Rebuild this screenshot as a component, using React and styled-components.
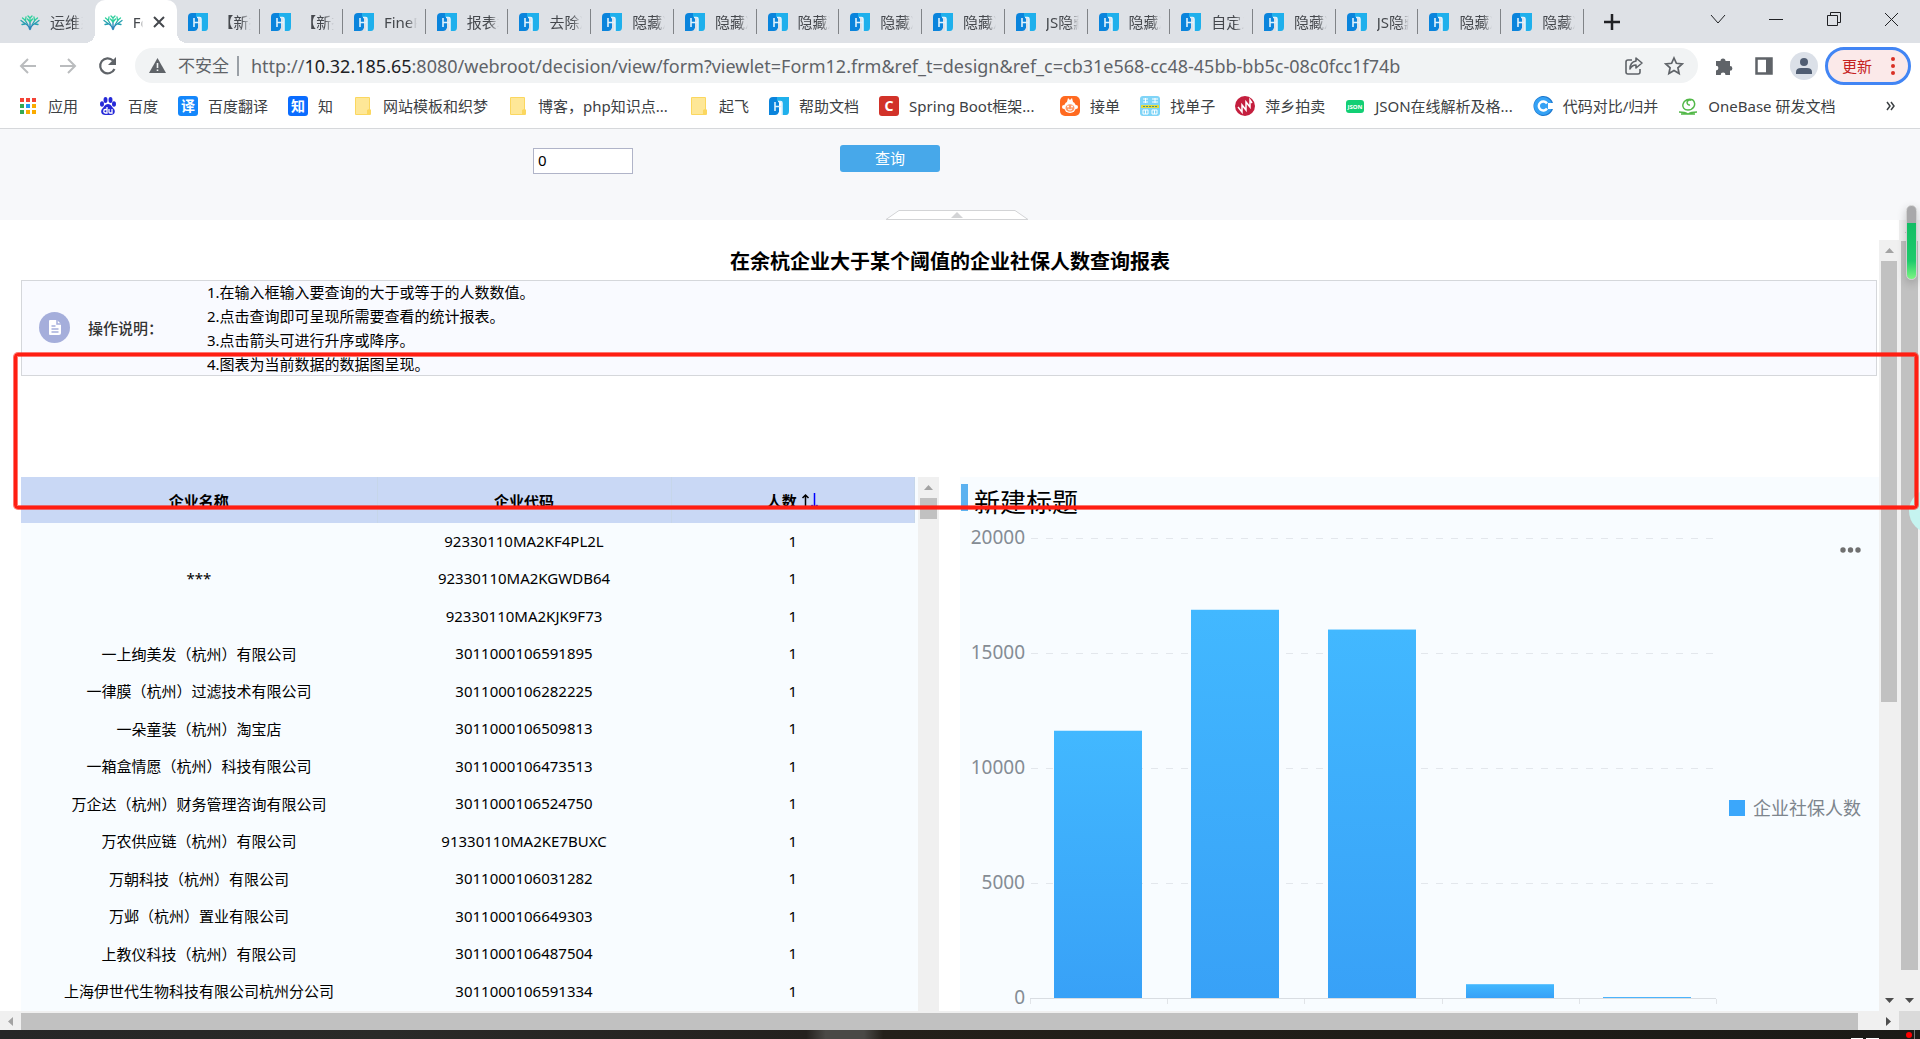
import React, { useState } from 'react';
import styled, { createGlobalStyle } from 'styled-components';

const GlobalStyle = createGlobalStyle`
* { box-sizing: border-box; }
body {
  margin: 0;
  background: #fff;
  color: #000;
  font-family: "Noto Sans", "Noto Sans CJK SC", sans-serif;
  font-size: 15px;
}
button { border: 0; padding: 0; background: none; font: inherit; color: inherit; cursor: pointer; }
input { font: inherit; }
svg { display: block; }
`;

const Page = styled.div`
position: relative;
display: flex;
flex-direction: column;
min-height: 100vh;
overflow: hidden;
`;

/* ---------- browser header ---------- */

const TabStrip = styled.div`
display: flex;
height: 43px;
padding-left: 12px;
background: #dee1e6;
`;

const Tabs = styled.div`
display: flex;
flex: 1;
min-width: 0;
`;

const Tab = styled.button`
position: relative;
display: flex;
flex: 1 1 0;
min-width: 0;
align-items: center;
gap: 10px;
padding: ${({ $line }) => ($line ? '0 9px 0 11px' : '0 12px 0 8px')};
color: #45484d;
text-align: left;
border-radius: ${({ $active }) => ($active ? '10px 10px 0 0' : '0')};
background: ${({ $active }) => ($active ? '#fff' : 'transparent')};
&::before {
  content: "";
  display: ${({ $active }) => ($active ? 'block' : 'none')};
  position: absolute;
  bottom: 0;
  left: -10px;
  right: -10px;
  height: 10px;
  background:
    radial-gradient(circle at 0 0, transparent 10px, #fff 10px) left / 10px 10px no-repeat,
    radial-gradient(circle at 100% 0, transparent 10px, #fff 10px) right / 10px 10px no-repeat;
}
&::after {
  content: "";
  display: ${({ $line }) => ($line ? 'block' : 'none')};
  position: absolute;
  right: 0;
  top: 9px;
  width: 1px;
  height: 25px;
  background: #808387;
}
`;

const TabTitle = styled.span`
flex: 1;
min-width: 0;
overflow: hidden;
white-space: nowrap;
mask-image: linear-gradient(90deg, #000 70%, transparent);
`;

const WindowTools = styled.div`
display: flex;
justify-content: space-between;
width: 336px;
padding: 0 20px 0 18px;
color: #202124;
`;

const WindowButtons = styled.div`
display: flex;
gap: 42px;
padding-bottom: 6px;
`;

const Toolbar = styled.div`
display: flex;
align-items: center;
height: 45px;
padding: 0 9px 0 18px;
color: #5f6368;
`;

const NavButtons = styled.div`
display: flex;
gap: 20px;
width: 117px;
`;

const AddressBar = styled.div`
display: flex;
flex: 1;
align-items: center;
height: 35px;
padding: 0 14px;
border-radius: 18px;
background: #f1f3f4;
font-size: 17px;
`;

const Insecure = styled.span`
margin-left: 12px;
padding-right: 8px;
border-right: 2px solid #9aa0a6;
line-height: 20px;
white-space: nowrap;
`;

const Url = styled.span`
flex: 1;
min-width: 0;
margin-left: 12px;
font-size: 18px;
white-space: nowrap;
outline: none;
b { font-weight: 400; color: #202124; }
`;

const AddressIcons = styled.div`
display: flex;
gap: 20px;
`;

const Extensions = styled.div`
display: flex;
align-items: center;
gap: 20px;
margin: 0 7px 0 16px;
`;

const Avatar = styled.button`
width: 28px;
height: 28px;
margin-left: -4px;
border-radius: 50%;
background: #dbe0e8;
overflow: hidden;
`;

const UpdateButton = styled.button`
display: flex;
align-items: center;
justify-content: space-between;
width: 86px;
height: 38px;
padding: 0 13px 0 14px;
border: 3px solid #4285f4;
border-radius: 19px;
background: #fbe9e9;
color: #c5221f;
`;

const Bookmarks = styled.nav`
display: flex;
align-items: center;
gap: 20px;
height: 41px;
padding: 0 24px 4px 18px;
border-bottom: 1px solid #d6d8db;
button { margin-left: auto; color: #3c4043; }
`;

const Bookmark = styled.a`
display: flex;
align-items: center;
gap: 10px;
min-width: ${({ $long }) => ($long ? '161px' : '0')};
color: #3c4043;
line-height: 20px;
white-space: nowrap;
text-decoration: none;
`;

const Badge = styled.span`
width: 20px;
height: 20px;
border-radius: 3px;
background: ${({ $bg }) => $bg};
color: #fff;
font-size: 14px;
font-weight: 700;
line-height: 20px;
text-align: center;
`;

/* ---------- query form ---------- */

const QueryForm = styled.form`
position: relative;
display: flex;
align-items: flex-start;
gap: 207px;
height: 91px;
padding: 16px 0 0 533px;
background: #f7f8fa;
`;

const NumberInput = styled.input`
width: 100px;
height: 26px;
margin-top: 3px;
padding: 0 4px 2px;
border: 1px solid #b0b4c8;
background: #fff;
outline: none;
`;

const QueryButton = styled.button`
width: 100px;
height: 27px;
border-radius: 3px;
background: #47a8ea;
color: #fff;
line-height: 27px;
`;

const Handle = styled.button`
position: absolute;
bottom: 0;
left: calc(50% - 75px);
`;

/* ---------- report ---------- */

const Viewport = styled.div`
display: flex;
flex: 1;
`;

const Report = styled.main`
flex: 1;
min-width: 0;
padding: 27px 0 0 21px;
`;

const Title = styled.h1`
margin: 0 0 3px;
font-size: 20px;
font-weight: 700;
line-height: 30px;
text-align: center;
`;

const Info = styled.section`
display: flex;
align-items: center;
height: 96px;
margin-right: 2px;
padding: 0 0 1px 17px;
border: 1px solid #d5d7db;
background: #f9faff;
`;

const InfoLabel = styled.strong`
width: 119px;
margin-left: 18px;
font-weight: 500;
color: #333;
`;

const Steps = styled.ol`
margin: 0;
padding: 0;
list-style: none;
line-height: 24px;
`;

const Panels = styled.div`
display: grid;
grid-template-columns: 1fr 1fr;
gap: 20px;
margin-top: 101px;
`;

const TablePanel = styled.section`
display: flex;
gap: 3px;
margin-right: 1px;
background: #f8fcff;
`;

const Table = styled.table`
flex: 1;
border-collapse: collapse;
table-layout: fixed;
text-align: center;
th {
  height: 46px;
  padding: 0;
  border-right: 1px solid #c6d6ea;
  background: #c9d8f5;
}
td { height: 38px; padding: 0 0 3px; }
tr:nth-child(even) td { height: 37px; }
`;

const NameCol = styled.col`
width: 356px;
`;

const CodeCol = styled.col`
width: 294px;
`;

const SortButton = styled.button`
margin-left: ${({ $down }) => ($down ? '0' : '4px')};
color: ${({ $down }) => ($down ? '#00f' : '#000')};
svg { display: inline-block; vertical-align: -2px; }
`;

const ChartPanel = styled.section`
position: relative;
background: #f8fcff;
`;

const ChartTitle = styled.h2`
position: absolute;
top: 7px;
left: 1px;
display: flex;
gap: 6px;
margin: 0;
font-family: "Liberation Serif", "Noto Sans CJK SC", serif;
font-size: 26px;
font-weight: 400;
line-height: 40px;
&::before {
  content: "";
  width: 7px;
  height: 27px;
  background: #5cb2f0;
}
`;

const Chart = styled.svg`
width: 100%;
height: auto;
font-size: 19px;
fill: #858c94;
`;

const Legend = styled.div`
position: absolute;
top: 317px;
right: 18px;
display: flex;
align-items: center;
gap: 8px;
color: #7d858d;
font-size: 18px;
line-height: 28px;
&::before {
  content: "";
  width: 16px;
  height: 16px;
  background: #3ba7fb;
}
`;

const More = styled.button`
position: absolute;
top: 69px;
right: 14px;
`;

/* ---------- scroll bars ---------- */

const Track = styled.div`
display: flex;
flex-direction: ${({ $row }) => ($row ? 'row' : 'column')};
flex: ${({ $row, $width }) => ($row ? '1' : `0 0 ${$width || 21}px`)};
margin-top: ${({ $top }) => $top || 0}px;
padding: ${({ $row }) => ($row ? '2px 0 0' : '0 2px')};
background: #f0f0f0;
`;

const Arrow = styled.button`
display: grid;
place-items: center;
flex: 0 0 21px;
color: ${({ $dim }) => ($dim ? '#a3a3a3' : '#4d4d4d')};
svg { transform: rotate(${({ $turn }) => $turn}deg); }
`;

const Thumb = styled.div`
flex: ${({ $size }) => $size} 1 0;
background: #c1c1c1;
`;

const Rest = styled.div`
flex: ${({ $size }) => $size} 1 0;
`;

const BottomBar = styled.div`
display: flex;
height: 19px;
`;

const Corner = styled.div`
width: 21px;
background: #dadada;
`;

const Taskbar = styled.footer`
display: flex;
justify-content: flex-end;
height: 9px;
background: linear-gradient(90deg, #262626 0, #2a2a28 20%, #24211e 42%, #4a4946 43%, #4a4946 45%, #24201a 46%, #1b1a16 100%);
`;

/* ---------- things lying over the page ---------- */

const Marker = styled.div`
position: absolute;
top: 353px;
left: 14px;
right: 2px;
height: 156px;
border: 3px solid #ff1e12;
border-radius: 4px;
box-shadow: 0 0 0 1px rgba(255, 30, 18, .6), inset 0 0 0 1px rgba(255, 30, 18, .6);
pointer-events: none;
`;

const Meter = styled.div`
position: absolute;
top: 205px;
right: 3px;
width: 11px;
height: 75px;
border: 1px solid #d0d0d0;
border-radius: 6px;
background: linear-gradient(#a8a8aa 17px, #12bd64 17px, #1ecb6c 55px, #7df582);
box-shadow: 0 3px 10px rgba(0, 0, 0, .2);
`;

const Bubble = styled.div`
position: absolute;
top: 489px;
right: -33px;
width: 44px;
height: 44px;
border-radius: 50%;
background: #c5f4f0;
`;

const Svg = ({ w = 20, h, children, ...rest }) => (
  <svg width={w} height={h || w} viewBox={`0 0 ${w} ${h || w}`} fill="none" stroke="currentColor" aria-hidden="true" {...rest}>
    {children}
  </svg>
);

const TreeIcon = () => (
  <Svg strokeWidth="1.3" strokeLinecap="round">
    <path stroke="#2a86b8" d="M10 17.500V9M9.500 17C9 13.500 7 12.500 5 11.500M10.500 17C11 13.500 13 12.500 15 11.500" />
    <path stroke="#25a0b0" d="M8 13 5 8M12 13l3-5M5 11.500 1 8.500M15 11.500 19 8.500M5 12l-3 .5M15 12l3 .5" />
    <path stroke="#2ccf9c" d="M10 10 7.500 7M10 10l2.500-3M10 6 8 4M10 6 12 4M10 9V6M5 8 2.500 6M5.500 8.500 6 5M15 8l2.500-2M14.500 8.500 14 5" />
  </Svg>
);

const FanIcon = () => (
  <Svg stroke="none">
    <path fill="#0a84dc" d="M0 5Q0 1 4 1h6v14.500q-1 3.500-4 3.500H0z" />
    <path fill="#1fb0ec" d="M8 1h12v14q0 4-3 4h-4V5H8z" />
    <path fill="none" stroke="#dff2fd" strokeWidth="1.600" d="M6 15V6M6 10.500h7M9 5.500h2.500q1.500 0 1.500 1.500V19" />
  </Svg>
);

const FolderIcon = () => (
  <Svg stroke="none">
    <path fill="#fbd75f" d="M3 1h13q1 0 1 1v11l1 1v4q0 1-1 1H3q-1 0-1-1V2q0-1 1-1z" />
    <path fill="#fee797" d="M3 2h13v11l-2 1v4H3z" />
  </Svg>
);

const AppsIcon = () => (
  <Svg stroke="none">
    {['#f44336', '#f44336', '#f44336', '#34a853', '#2196f3', '#fbab00', '#34a853', '#fbab00', '#fbab00'].map((c, i) => (
      <rect key={i} x={2 + (i % 3) * 6} y={2 + Math.floor(i / 3) * 6} width="4" height="4" fill={c} />
    ))}
  </Svg>
);

const BaiduIcon = () => (
  <Svg stroke="none" fill="#2529d8">
    <ellipse cx="4" cy="8" rx="2" ry="2.800" />
    <ellipse cx="7.500" cy="4" rx="2" ry="2.900" />
    <ellipse cx="12.500" cy="4" rx="2" ry="2.900" />
    <ellipse cx="16" cy="8" rx="2" ry="2.800" />
    <path d="M10 8c3 0 4 3 6 5 2 3 0 6-3 6H7c-3 0-5-3-3-6 2-2 3-5 6-5z" />
    <path fill="none" stroke="#fff" strokeWidth="1.300" d="M9 11v6H7.500a1.500 1.500 0 0 1 0-3.500H9M11 13v3q0 1 1 1h2v-4" />
  </Svg>
);

const MonkeyIcon = () => (
  <Svg stroke="none">
    <rect width="20" height="20" rx="5" fill="#ff6a20" />
    <circle cx="10" cy="11" r="6" fill="#fff" />
    <circle cx="4" cy="11" r="2" fill="#fff" />
    <circle cx="16" cy="11" r="2" fill="#fff" />
    <path fill="#fff" d="M7 6 8 2l2 2 2-2 1 4z" />
    <ellipse cx="10" cy="12" rx="4.500" ry="3.800" fill="#ff9a68" />
    <path stroke="#fff" fill="none" d="M8 13q2 2 4 0" />
    <circle cx="8" cy="10.500" r="1" fill="#fff" />
    <circle cx="12" cy="10.500" r="1" fill="#fff" />
  </Svg>
);

const FindIcon = () => (
  <Svg stroke="none">
    <rect width="20" height="20" rx="3" fill="#7fd4f7" />
    <path stroke="#fff" fill="none" d="M3 3h5M5.500 2v5M3 6h5M12 3h6M15 2v5M12 6h6M3 14h5v4H3zM12 14h5v4h-5zM5.500 14v4M14.500 14v4" />
    <rect x="1" y="9" width="18" height="3" fill="#e4dc3c" />
    <path stroke="#4a8f8a" strokeDasharray="2 1" d="M3 10.500h14" />
  </Svg>
);

const AuctionIcon = () => (
  <Svg stroke="none">
    <circle cx="10" cy="10" r="10" fill="#c41f3e" />
    <path stroke="#fff" strokeWidth="1.500" fill="none" d="M3 11l4 5V9l4 5V6l4 5V4l2 3" />
  </Svg>
);

const JsonIcon = () => (
  <Svg stroke="none">
    <rect x="1" y="4" width="18" height="13" rx="3" fill="#12cf74" />
    <text x="10" y="13" fill="#fff" fontSize="6" fontWeight="700" textAnchor="middle">JSON</text>
  </Svg>
);

const CompareIcon = () => (
  <Svg stroke="none">
    <path fill="#1f7ad0" d="M20 7A10 10 0 1 0 20 13H14V7z" />
    <path fill="#35a2f5" d="M18.500 7A9 9 0 1 0 18.500 13H15V7z" />
    <path fill="none" stroke="#fff" strokeWidth="2.400" d="M14 7.500a4.500 4.500 0 1 0 0 5" />
  </Svg>
);

const OneBaseIcon = () => (
  <Svg stroke="#52b848" strokeWidth="1.500">
    <path d="M12 9a2.500 2.500 0 1 1 1-4.500M15 4c4 5 0 10-5 10-4 0-6-3-5-6 1-4 6-6 10-4M1 16c4 0 6 0 9 2 3-2 5-2 9-2M3 18h14" />
  </Svg>
);

const Triangle = () => (
  <Svg w={9} h={5} stroke="none" fill="currentColor">
    <path d="M4.500 0 9 5H0z" />
  </Svg>
);

const TABS = [
  '【新报', '【新报', 'FineReport', '报表块', '去除决策', '隐藏决策', '隐藏决策', '隐藏决策', '隐藏决策', '隐藏决策',
  'JS隐藏', '隐藏决策', '自定义', '隐藏决策', 'JS隐藏', '隐藏决策', '隐藏决策',
];

const BOOKMARKS = [
  ['应用', <AppsIcon />],
  ['百度', <BaiduIcon />],
  ['百度翻译', <Badge $bg="#1487fb">译</Badge>],
  ['知', <Badge $bg="#0a6cff">知</Badge>],
  ['网站模板和织梦', <FolderIcon />],
  ['博客，php知识点...', <FolderIcon />],
  ['起飞', <FolderIcon />],
  ['帮助文档', <FanIcon />],
  ['Spring Boot框架...', <Badge $bg="#d23229">C</Badge>],
  ['接单', <MonkeyIcon />],
  ['找单子', <FindIcon />],
  ['萍乡拍卖', <AuctionIcon />],
  ['JSON在线解析及格...', <JsonIcon />],
  ['代码对比/归并', <CompareIcon />],
  ['OneBase 研发文档', <OneBaseIcon />],
];

const COMPANIES = [
  ['', '92330110MA2KF4PL2L'],
  ['***', '92330110MA2KGWDB64'],
  ['', '92330110MA2KJK9F73'],
  ['一上绚美发（杭州）有限公司', '3011000106591895'],
  ['一律膜（杭州）过滤技术有限公司', '3011000106282225'],
  ['一朵童装（杭州）淘宝店', '3011000106509813'],
  ['一箱盒情愿（杭州）科技有限公司', '3011000106473513'],
  ['万企达（杭州）财务管理咨询有限公司', '3011000106524750'],
  ['万农供应链（杭州）有限公司', '91330110MA2KE7BUXC'],
  ['万朝科技（杭州）有限公司', '3011000106031282'],
  ['万邺（杭州）置业有限公司', '3011000106649303'],
  ['上教仪科技（杭州）有限公司', '3011000106487504'],
  ['上海伊世代生物科技有限公司杭州分公司', '3011000106591334'],
];

const BARS = [11620, 16880, 16020, 600, 40];

function Scrollbar({ row, top, width, size, after, noEnd }) {
  return (
    <Track $row={row} $top={top} $width={width}>
      <Arrow type="button" aria-label={row ? '向左' : '向上'} $dim $turn={row ? -90 : 0}><Triangle /></Arrow>
      <Thumb $size={size} />
      <Rest $size={after} />
      {!noEnd && <Arrow type="button" aria-label={row ? '向右' : '向下'} $turn={row ? 90 : 180}><Triangle /></Arrow>}
    </Track>
  );
}

function BrowserHeader() {
  return (
    <header>
      <TabStrip>
        <Tabs>
          <Tab><TreeIcon /><TabTitle>运维系统</TabTitle></Tab>
          <Tab $active>
            <TreeIcon />
            <TabTitle>Form</TabTitle>
            <Svg w={12} strokeWidth="2"><path d="M1 1l10 10M11 1 1 11" /></Svg>
          </Tab>
          {TABS.map((name, i) => (
            <Tab key={i} $line><FanIcon /><TabTitle>{name}</TabTitle></Tab>
          ))}
        </Tabs>
        <WindowTools>
          <button aria-label="新标签页"><Svg strokeWidth="2.500"><path d="M10 2v16M2 10h16" /></Svg></button>
          <WindowButtons>
            <button aria-label="搜索标签页"><Svg w={16}><path d="M1 4l7 8 7-8" /></Svg></button>
            <button aria-label="最小化"><Svg w={16}><path d="M1 8.500h14" /></Svg></button>
            <button aria-label="还原"><Svg w={16}><path d="M1.500 4.500h10v10h-10zM4.500 4V1.500h10v10H12" /></Svg></button>
            <button aria-label="关闭"><Svg w={16}><path d="M1 2l13 13M14 2 1 15" /></Svg></button>
          </WindowButtons>
        </WindowTools>
      </TabStrip>
      <Toolbar>
        <NavButtons>
          <button aria-label="后退"><Svg stroke="#babcbe" strokeWidth="2"><path d="M18 10H3M10 3l-7 7 7 7" /></Svg></button>
          <button aria-label="前进"><Svg stroke="#babcbe" strokeWidth="2"><path d="M2 10h15M10 3l7 7-7 7" /></Svg></button>
          <button aria-label="刷新">
            <Svg strokeWidth="2.200">
              <path d="M16.500 13A7.500 7.500 0 1 1 15 4.500" />
              <path stroke="none" fill="currentColor" d="M18 1v8h-8z" />
            </Svg>
          </button>
        </NavButtons>
        <AddressBar>
          <Svg w={17} stroke="none" fill="currentColor">
            <path d="M8.500 1 17 16H0z" />
            <path fill="#f1f3f4" d="M7.700 6h1.600v5H7.700zM7.700 12.500h1.600v1.600H7.700z" />
          </Svg>
          <Insecure>不安全</Insecure>
          <Url contentEditable suppressContentEditableWarning spellCheck={false} role="textbox" aria-label="地址">
            http://<b>10.32.185.65</b>:8080/webroot/decision/view/form?viewlet=Form12.frm&amp;ref_t=design&amp;ref_c=cb31e568-cc48-45bb-bb5c-08c0fcc1f74b
          </Url>
          <AddressIcons>
            <button aria-label="分享">
              <Svg strokeWidth="1.600"><path d="M8 4H4q-2 0-2 2v10q0 2 2 2h10q2 0 2-2v-3M12 2l6 5-6 5V9q-4 0-6 4 0-7 6-8z" strokeLinejoin="round" /></Svg>
            </button>
            <button aria-label="收藏">
              <Svg strokeWidth="1.700"><path d="M10 2l2.400 5.300 5.800.6-4.300 3.900 1.200 5.700-5.100-2.900-5.100 2.900 1.200-5.700L1.800 7.900l5.800-.6z" /></Svg>
            </button>
          </AddressIcons>
        </AddressBar>
        <Extensions>
          <button aria-label="扩展程序">
            <Svg stroke="none" fill="currentColor"><path d="M2 5h4.500a2.500 2.500 0 1 1 5 0H16v5a2.400 2.400 0 1 1 0 4.800V19h-4.500a2.400 2.400 0 1 0-4.800 0H2v-4.500a2.400 2.400 0 1 0 0-4.800z" /></Svg>
          </button>
          <button aria-label="侧边栏"><Svg strokeWidth="2.500"><path d="M2.500 2.500h15v15h-15z" /><path d="M14.500 2v16" strokeWidth="5" /></Svg></button>
          <Avatar aria-label="用户">
            <Svg w={28} stroke="none" fill="#505d72"><circle cx="14" cy="10" r="4" /><path d="M6 22v-2q0-4 5-4h6q5 0 5 4v2z" /></Svg>
          </Avatar>
        </Extensions>
        <UpdateButton>
          更新
          <Svg w={4} h={18} stroke="none" fill="#d93025"><circle cx="2" cy="2" r="2" /><circle cx="2" cy="9" r="2" /><circle cx="2" cy="16" r="2" /></Svg>
        </UpdateButton>
      </Toolbar>
      <Bookmarks>
        {BOOKMARKS.map(([name, icon]) => (
          <Bookmark href="#" key={name} $long={name.endsWith('...')}>{icon}{name}</Bookmark>
        ))}
        <button aria-label="更多书签"><Svg w={10} strokeWidth="1.500"><path d="M1 1l3 4-3 4M5 1l3 4-3 4" /></Svg></button>
      </Bookmarks>
    </header>
  );
}

function BarChart() {
  // one unit of the value axis is 115 / 5000 px, category step is a bit over 137px
  const x = (i) => Math.round(i * 137.2);
  const y = (value) => 521 - (value * 115) / 5000;
  return (
    <Chart viewBox="0 0 919 534" role="img" aria-label="企业社保人数">
      <defs>
        <linearGradient id="bar" x1="0" y1="0" x2="0" y2="1">
          <stop offset="0" stopColor="#42b8ff" />
          <stop offset="1" stopColor="#38a1f7" />
        </linearGradient>
      </defs>
      {[20000, 15000, 10000, 5000, 0].map((v) => (
        <g key={v}>
          <text x="65" y={y(v) + 6} textAnchor="end">{v}</text>
          {v > 0 && <path d={`M71 ${y(v) + 0.5}H756`} stroke="#e3e7ec" strokeDasharray="7 8" />}
        </g>
      ))}
      {BARS.map((v, i) => (
        <rect key={i} x={94 + x(i)} y={y(v)} width="88" height={521 - y(v)} fill="url(#bar)" />
      ))}
      <path d="M70 521.500H756" stroke="#d9dde2" />
      {[0, 1, 2, 3, 4, 5].map((i) => (
        <path key={i} d={`M${70.5 + x(i)} 522v5`} stroke="#e1e4e8" />
      ))}
    </Chart>
  );
}

export default function App() {
  const [count, setCount] = useState('0')
  const submit = (event) => event.preventDefault()
  return (
    <Page>
      <GlobalStyle />
      <BrowserHeader />
      <QueryForm onSubmit={submit}>
        <NumberInput aria-label="人数" value={count} onChange={(e) => setCount(e.target.value)} />
        <QueryButton>查询</QueryButton>
        <Handle type="button" aria-label="收起">
          <Svg w={144} h={10} stroke="#d3d4d6">
            <path fill="#fff" d="M1 9.500 14 .5h116l13 9z" />
            <path fill="#d3d4d6" stroke="none" d="M72 2l6 6H66z" />
          </Svg>
        </Handle>
      </QueryForm>
      <Viewport>
        <Report>
          <Title>在余杭企业大于某个阈值的企业社保人数查询报表</Title>
          <Info>
            <Svg w={31} stroke="none">
              <circle cx="15.500" cy="15.500" r="15.500" fill="#a5aedb" />
              <path fill="#fff" d="M11 8h7l4 4v9q0 2-2 2h-9q-1 0-1-1V9q0-1 1-1z" />
              <path stroke="#a5aedb" strokeWidth="1.500" d="M12.500 14h4M12.500 17h7M12.500 20h7M18 8v4h4" fill="none" />
            </Svg>
            <InfoLabel>操作说明：</InfoLabel>
            <Steps>
              <li>1.在输入框输入要查询的大于或等于的人数数值。</li>
              <li>2.点击查询即可呈现所需要查看的统计报表。</li>
              <li>3.点击箭头可进行升序或降序。</li>
              <li>4.图表为当前数据的数据图呈现。</li>
            </Steps>
          </Info>
          <Panels>
            <TablePanel>
              <Table>
                <colgroup><NameCol /><CodeCol /><col /></colgroup>
                <thead>
                  <tr>
                    <th>企业名称</th>
                    <th>企业代码</th>
                    <th>
                      人数
                      <SortButton aria-label="升序"><Svg w={9} h={16} strokeWidth="1.500"><path d="M4.500 16V2M1.500 5l3-3 3 3" /></Svg></SortButton>
                      <SortButton aria-label="降序" $down><Svg w={9} h={16} strokeWidth="1.500"><path d="M4.500 0v15M1.500 12l3 3 3-3" /></Svg></SortButton>
                    </th>
                  </tr>
                </thead>
                <tbody>
                  {COMPANIES.map(([name, code]) => (
                    <tr key={code}>
                      <td>{name}</td>
                      <td>{code}</td>
                      <td>1</td>
                    </tr>
                  ))}
                </tbody>
              </Table>
              <Scrollbar size={21} after={492} noEnd />
            </TablePanel>
            <ChartPanel>
              <ChartTitle>新建标题</ChartTitle>
              <BarChart />
              <Legend>企业社保人数</Legend>
              <More aria-label="更多">
                <Svg w={28} h={8} stroke="none" fill="#707070"><circle cx="6" cy="4" r="2.700" /><circle cx="13.500" cy="4" r="2.700" /><circle cx="21" cy="4" r="2.700" /></Svg>
              </More>
            </ChartPanel>
          </Panels>
        </Report>
        <Scrollbar top={20} width={20} size={441} after={288} />
        <Scrollbar size={729} after={20} />
      </Viewport>
      <BottomBar>
        <Scrollbar row size={1837} after={20} />
        <Corner />
      </BottomBar>
      <Taskbar>
        <Svg w={72} h={9} stroke="none">
          <path fill="#fff" d="M3 8h12v1H3zM18 8h13v1H18z" />
          <circle cx="61" cy="5" r="3" fill="#f00" />
          <path fill="#777" d="M66 0h1v9h-1z" />
        </Svg>
      </Taskbar>
      <Bubble />
      <Meter />
      <Marker />
    </Page>
  );
}
